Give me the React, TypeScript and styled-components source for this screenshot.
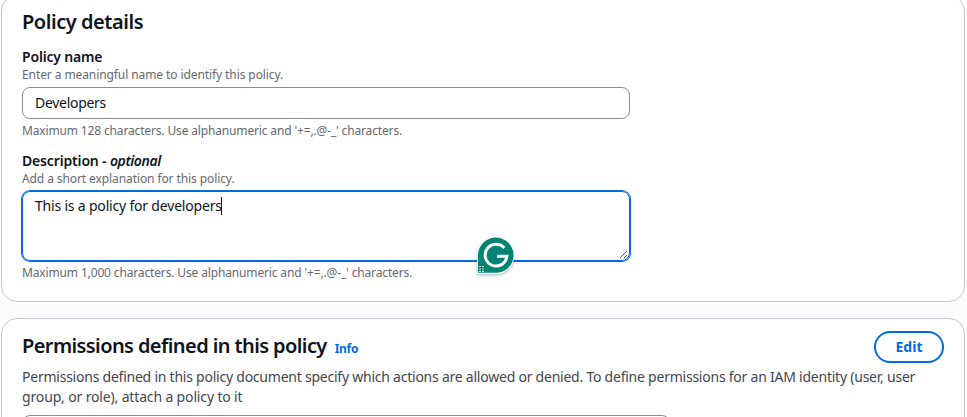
import React from "react";
import styled, { createGlobalStyle } from "styled-components";

const GlobalStyle = createGlobalStyle`
  * { box-sizing: border-box; }
  body {
    margin: 0;
    background: #fcfcfd;
    color: #0f141a;
    font-family: "Noto Sans", "Open Sans", sans-serif;
    font-size: 14px;
    line-height: 20px;
    overflow: hidden;
  }
`;

const Page = styled.main`
  display: flex;
  flex-direction: column;
  gap: 16px;
  height: 417px;
  overflow: hidden;
  padding: 0 2px 0 1px;
`;

const Card = styled.section`
  flex: none;
  background: #fff;
  border: 1px solid #c6c6cd;
  border-radius: 16px;
  padding: 14px 20px 20px;
`;

const DetailsCard = styled(Card)`
  margin-top: -5px;
  height: 307px;
`;

const PermissionsCard = styled(Card)`
  height: 160px;
  padding-top: 12px;
`;

const Tracked = styled.span<{ $track?: number }>`
  letter-spacing: ${({ $track = 0 }) => $track}px;
  white-space: nowrap;
`;

const Title = styled.h2<{ $track: number }>`
  margin: 0;
  font-size: 20px;
  line-height: 24px;
  font-weight: 600;
  letter-spacing: ${({ $track }) => $track}px;
`;

const Field = styled.div`
  display: flex;
  flex-direction: column;
  width: 608px;
  margin-top: 13px;

  & + & { margin-top: 12px; }
`;

const Label = styled.label`
  height: 20px;
  font-weight: 600;
  white-space: pre;
`;

const Hint = styled.div<{ $track: number }>`
  font-size: 12px;
  line-height: 16px;
  color: #656871;
  letter-spacing: ${({ $track }) => $track}px;
`;

const InputBox = styled.div`
  height: 32px;
  margin: 4px 0;
  padding: 5px 12px;
  border: 1px solid #8c8c94;
  border-radius: 8px;
`;

const TextAreaBox = styled.div`
  position: relative;
  height: 70px;
  margin: 4px 0;
  padding: 4px 12px;
  border: 1px solid #006ce0;
  border-radius: 8px;
  box-shadow: 0 0 0 1px #006ce0;
`;

const Caret = styled.span`
  display: inline-block;
  width: 1px;
  height: 18px;
  margin-left: -1px;
  vertical-align: -4px;
  background: #0f141a;
`;

const ResizeGrip = styled.svg`
  position: absolute;
  right: 1px;
  bottom: 1px;
`;

const AssistantBadge = styled.svg`
  position: absolute;
  left: 449px;
  top: 39px;
`;

const HeaderRow = styled.header`
  display: flex;
  justify-content: space-between;
  height: 32px;
`;

const Heading = styled.div`
  display: flex;
  align-items: baseline;
  gap: 8px;
  height: 24px;
  margin-top: 3px;
`;

const InfoLink = styled.a`
  color: #006ce0;
  font-size: 12px;
  line-height: 16px;
  font-weight: 700;
  letter-spacing: -0.3px;
`;

const EditButton = styled.button`
  width: 70px;
  height: 32px;
  padding: 0;
  border: 2px solid #006ce0;
  border-radius: 20px;
  background: #fff;
  color: #006ce0;
  font: 700 14px/20px "Noto Sans", sans-serif;
`;

const Description = styled.p`
  display: flex;
  flex-direction: column;
  margin: 4px 0 8px;
  color: #424650;
`;

const SearchBox = styled.div`
  width: 648px;
  height: 32px;
  border: 1px solid #8c8c94;
  border-radius: 8px;
`;

export default function App() {
  return (
    <>
      <GlobalStyle />
      <Page>
        <DetailsCard>
          <Title $track={-0.45}>Policy details</Title>
          <Field>
            <Label><Tracked $track={-0.18}>Policy name</Tracked></Label>
            <Hint $track={-0.09}>Enter a meaningful name to identify this policy.</Hint>
            <InputBox><Tracked $track={-0.3}>Developers</Tracked></InputBox>
            <Hint $track={-0.15}>Maximum 128 characters. Use alphanumeric and '+=,.@-_' characters.</Hint>
          </Field>
          <Field>
            <Label>
              <Tracked $track={-0.16}>{"Description - "}</Tracked>
              <Tracked as="i" $track={-0.42}>optional</Tracked>
            </Label>
            <Hint $track={-0.095}>Add a short explanation for this policy.</Hint>
            <TextAreaBox>
              <Tracked $track={-0.19}>This is a policy for developers</Tracked>
              <Caret />
              <ResizeGrip width="9" height="9" viewBox="0 0 9 9">
                <path d="M1 8L8 1M5 8L8 5" stroke="#55585c" strokeWidth="1" />
              </ResizeGrip>
              <AssistantBadge width="50" height="50" viewBox="0 0 50 50">
                <defs>
                  <filter id="badgeShadow" x="-20%" y="-20%" width="140%" height="150%">
                    <feDropShadow dx="0" dy="1.5" stdDeviation="1.8" floodColor="#000" floodOpacity="0.28" />
                  </filter>
                </defs>
                <path
                  d="M5 42.8V24.3A18.7 18.5 0 1 1 23.7 42.8Z"
                  fill="#fff"
                  filter="url(#badgeShadow)"
                />
                <path d="M6 41.8V24.2A17.8 17.6 0 1 1 23.8 41.8Z" fill="#028374" />
                <path
                  d="M32.3 17A10.9 10.9 0 1 0 34.9 25.2H25"
                  fill="none"
                  stroke="#fff"
                  strokeWidth="3"
                />
                <path d="M7.2 35.5h4.6M7.2 38h4.6M7.2 40.4h4.6" stroke="#fff" strokeWidth="1.2" strokeDasharray="1.6 1.3" />
              </AssistantBadge>
            </TextAreaBox>
            <Hint $track={-0.145}>Maximum 1,000 characters. Use alphanumeric and '+=,.@-_' characters.</Hint>
          </Field>
        </DetailsCard>
        <PermissionsCard>
          <HeaderRow>
            <Heading>
              <Title $track={-0.595}>Permissions defined in this policy</Title>
              <InfoLink>Info</InfoLink>
            </Heading>
            <EditButton>Edit</EditButton>
          </HeaderRow>
          <Description>
            <Tracked $track={-0.234}>
              Permissions defined in this policy document specify which actions are allowed or denied. To define permissions for an IAM identity (user, user
            </Tracked>
            <Tracked $track={-0.15}>group, or role), attach a policy to it</Tracked>
          </Description>
          <SearchBox />
        </PermissionsCard>
      </Page>
    </>
  );
}
